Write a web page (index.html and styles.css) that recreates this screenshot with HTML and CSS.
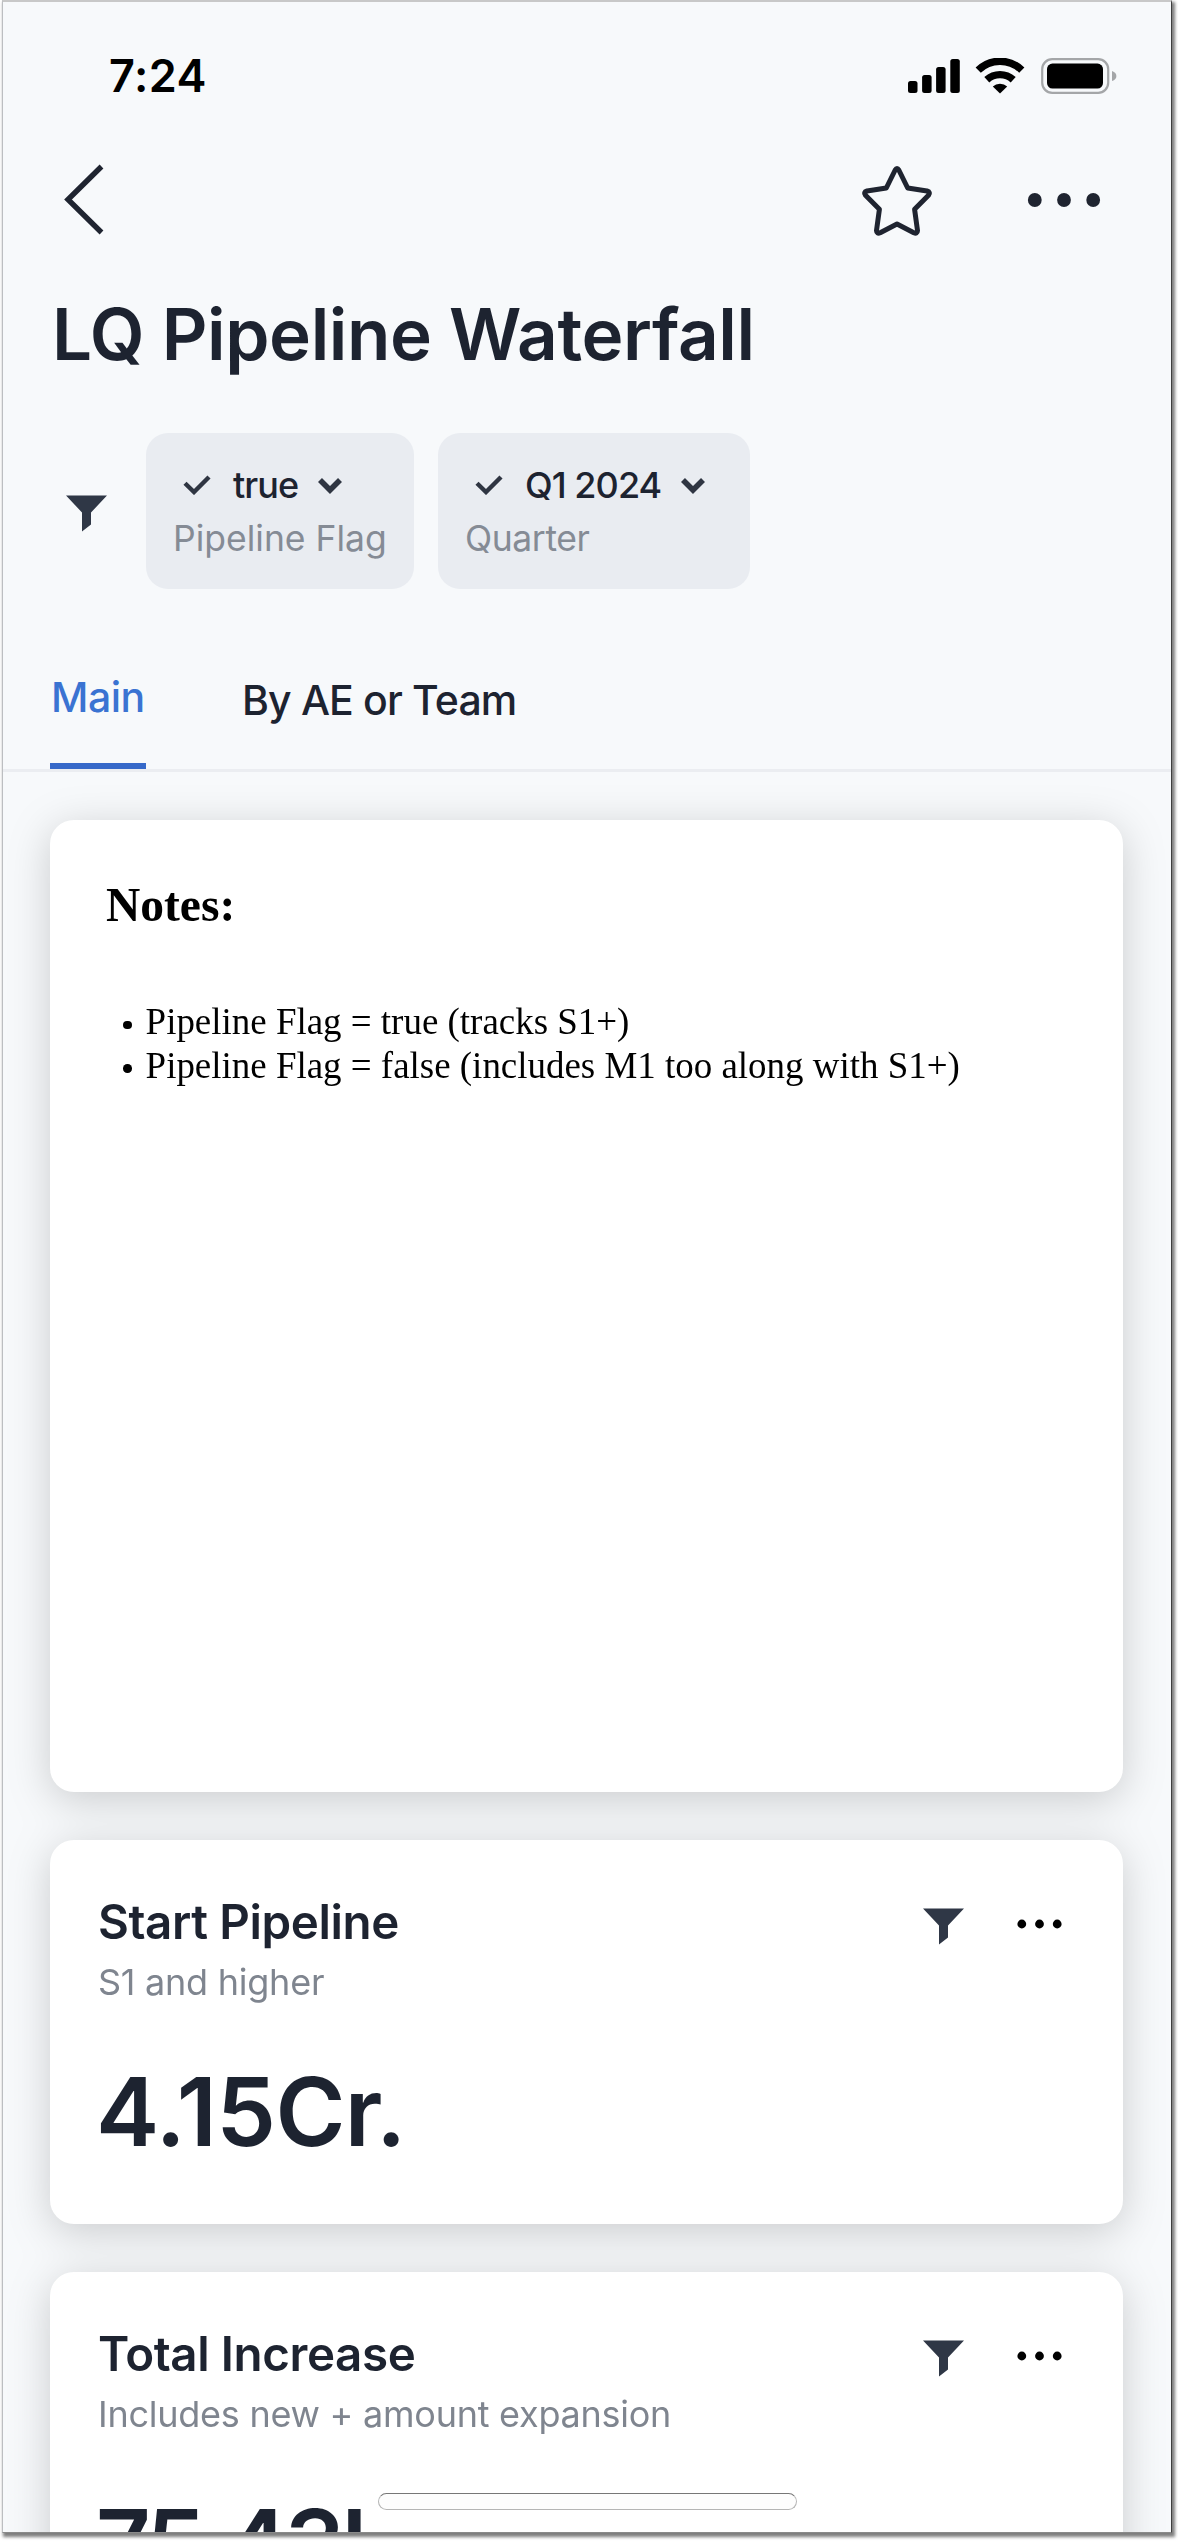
FILE: index.html
```html
<!DOCTYPE html>
<html lang="en">
<head>
<meta charset="utf-8">
<title>LQ Pipeline Waterfall</title>
<link rel="stylesheet" href="styles.css">
</head>
<body>
<svg width="0" height="0" class="sprite" aria-hidden="true">
  <symbol id="funnel" viewBox="0 0 41 37"><path d="M0 .5H41L25 17.5V29.5L16 36.5V17.5Z"/></symbol>
  <symbol id="check" viewBox="0 0 28 20"><path d="M2 8.2L11 17L26 2" fill="none" stroke="currentColor" stroke-width="4.4"/></symbol>
  <symbol id="caret" viewBox="0 0 24 17"><path d="M2 3L12 13L22 3" fill="none" stroke="currentColor" stroke-width="5.6"/></symbol>
  <symbol id="dots" viewBox="0 0 45 10"><circle cx="4.8" cy="5" r="4.4"/><circle cx="22.5" cy="5" r="4.4"/><circle cx="40.2" cy="5" r="4.4"/></symbol>
</svg>
<div class="screen">
  <div class="status">
    <span class="time">7:24</span>
    <div class="status-icons">
      <svg class="signal" width="52" height="36" viewBox="0 0 52 36"><rect x="0" y="23" width="9.5" height="12" rx="2.5"/><rect x="14.1" y="17" width="9.5" height="18" rx="2.5"/><rect x="28.1" y="9" width="9.5" height="26" rx="2.5"/><rect x="42.3" y="1" width="9.5" height="34" rx="2.5"/></svg>
      <svg class="wifi" width="50" height="36" viewBox="0 0 50 36"><g fill="none" stroke="#000" stroke-width="7.4"><path d="M3.2 12.2A31 31 0 0 1 46.8 12.2"/><path d="M11.8 21.8A19.5 19.5 0 0 1 38.2 21.8"/></g><path d="M17.8 28.6A10.3 10.3 0 0 1 32.2 28.6L25 35.6Z"/></svg>
      <svg width="76" height="36" viewBox="0 0 76 36"><rect x="1.2" y="1.2" width="66" height="33.6" rx="10" fill="none" stroke="#a4a6a8" stroke-width="2.2"/><rect x="6" y="5.6" width="56" height="25" rx="5.5"/><path d="M71 13Q75.4 14.5 75.4 18T71 23Z" fill="#a4a6a8"/></svg>
    </div>
  </div>
  <div class="nav">
    <svg width="42" height="74" viewBox="0 0 42 74"><path d="M37.5 3.5L4 36.5L37.5 69.5" fill="none" stroke="#1f2430" stroke-width="5.4"/></svg>
    <div class="nav-actions">
      <svg width="74" height="74" viewBox="0 0 74 74"><path d="M35.2 7Q37 3.8 38.8 7L47.7 25L67 28Q71 29.3 68.5 32.3L54.6 46.3L57.5 67.5Q57.3 71.2 53.8 69.8L37 61L20.2 69.8Q16.7 71.2 16.5 67.5L19.4 46.3L5.5 32.3Q3 29.3 7 28L26.3 25Z" fill="none" stroke="#1f2430" stroke-width="5" stroke-linejoin="round"/></svg>
      <svg width="74" height="16" viewBox="0 0 74 16" fill="#1f2430"><circle cx="7.8" cy="8" r="6.9"/><circle cx="37" cy="8" r="6.9"/><circle cx="66.2" cy="8" r="6.9"/></svg>
    </div>
  </div>
  <h1>LQ Pipeline Waterfall</h1>
  <div class="filters">
    <svg class="funnel" width="41" height="37"><use href="#funnel"/></svg>
    <div class="chip chip-flag">
      <div class="chip-value"><svg width="28" height="20"><use href="#check"/></svg><span>true</span><svg width="24" height="17"><use href="#caret"/></svg></div>
      <div class="chip-label">Pipeline Flag</div>
    </div>
    <div class="chip chip-quarter">
      <div class="chip-value"><svg width="28" height="20"><use href="#check"/></svg><span>Q1 2024</span><svg width="24" height="17"><use href="#caret"/></svg></div>
      <div class="chip-label">Quarter</div>
    </div>
  </div>
  <div class="tabs">
    <div class="tab active">Main</div>
    <div class="tab">By AE or Team</div>
  </div>
  <div class="cards">
    <div class="card notes">
      <h2>Notes:</h2>
      <ul>
        <li>Pipeline Flag = true (tracks S1+)</li>
        <li>Pipeline Flag = false (includes M1 too along with S1+)</li>
      </ul>
    </div>
    <div class="card kpi">
      <div class="kpi-head"><h3>Start Pipeline</h3><svg class="funnel" width="41" height="37"><use href="#funnel"/></svg><svg class="more" width="45" height="10"><use href="#dots"/></svg></div>
      <p class="sub">S1 and higher</p>
      <p class="value">4.15Cr.</p>
    </div>
    <div class="card kpi">
      <div class="kpi-head"><h3>Total Increase</h3><svg class="funnel" width="41" height="37"><use href="#funnel"/></svg><svg class="more" width="45" height="10"><use href="#dots"/></svg></div>
      <p class="sub">Includes new + amount expansion</p>
      <p class="value value-tight">75.43L</p>
    </div>
  </div>
  <div class="home"></div>
</div>
</body>
</html>
```
FILE: styles.css
```css
* { box-sizing: border-box; margin: 0; padding: 0; }
body { background: #fff; font-family: Inter, "Liberation Sans", sans-serif; color: #1d2330; height: 2541px; overflow: hidden; }
svg { display: block; flex: none; }
.sprite { position: absolute; }
.screen { position: relative; margin-left: 2px; width: 1170px; height: 2533px; overflow: hidden; background: #f7f9fb; border: 1px solid #bcbec1; border-top: 2px solid #c8c8c8; border-right-color: #3e3e3e; border-bottom-color: #8a8a8a; box-shadow: 2px 3px 3px 1px rgba(0,0,0,.5); }

.status { height: 147px; display: flex; align-items: center; justify-content: space-between; padding: 0 54px 0 106px; }
.time { font-size: 45px; font-weight: 600; line-height: 54px; letter-spacing: .5px; color: #000; }
.status-icons { display: flex; align-items: center; }
.signal { margin-right: 15px; }
.wifi { margin-right: 16px; }

.nav { height: 102px; display: flex; align-items: center; justify-content: space-between; padding: 0 70px 0 61px; }
.nav-actions { display: flex; align-items: center; gap: 93px; }

h1 { font-size: 71px; line-height: 166px; height: 165px; font-weight: 600; letter-spacing: -.42px; padding-left: 49px; white-space: nowrap; }

.filters { display: flex; align-items: center; padding: 17px 0 0 63px; height: 173px; }
.funnel { fill: #2f3746; }
.filters .funnel { margin-top: 5px; }
.chip { height: 156px; border-radius: 22px; background: #e9ecf1; padding: 30px 0 0 27px; white-space: nowrap; }
.chip-flag { width: 268px; margin-left: 39px; }
.chip-quarter { width: 312px; margin-left: 24px; }
.chip-value { display: flex; align-items: center; height: 44px; font-size: 36px; font-weight: 500; letter-spacing: -.95px; padding-left: 10px; color: #2f3542; }
.chip-value span { margin: 0 20px 0 22px; color: #1d2330; }
.chip-label { font-size: 35.5px; line-height: 44px; margin-top: 10px; color: #858b95; }
.chip-quarter .chip-label { letter-spacing: -.4px; }

.tabs { display: flex; height: 183px; border-bottom: 3px solid #ebedf1; padding-left: 47px; gap: 96px; font-size: 41px; line-height: 50px; font-weight: 450; white-space: nowrap; }
.tab { padding-top: 86px; letter-spacing: -.85px; }
.tab.active { width: 96px; padding: 83px 0 0 1px; border-bottom: 6px solid #3669c9; color: #3a73d2; letter-spacing: -.5px; }

.cards { display: flex; flex-direction: column; gap: 48px; padding: 48px 48px 0 47px; filter: drop-shadow(0 8px 21px rgba(0,0,0,.18)); }
.card { background: #fff; border-radius: 24px; height: 384px; flex: none; }
.notes { height: 972px; font-family: "Liberation Serif", serif; color: #000; padding: 58px 0 0 56px; }
.notes h2 { font-size: 47.5px; line-height: 54px; }
.notes ul { list-style: none; margin-top: 68px; font-size: 36.95px; line-height: 43.7px; }
.notes li { display: flex; align-items: center; white-space: nowrap; }
.notes li::before { content: ""; width: 8.6px; height: 8.6px; border-radius: 50%; background: #000; margin: 6px 14px 0 17px; }

.kpi { padding: 54px 0 0 48px; }
.kpi-head { display: flex; align-items: center; height: 56px; padding-right: 61px; }
h3 { font-size: 47.5px; font-weight: 600; line-height: 56px; letter-spacing: -.4px; margin-right: auto; white-space: nowrap; }
.kpi-head .funnel { margin-top: 8px; }
.more { margin: 4px 0 0 53px; }
.sub { font-size: 36px; line-height: 44px; letter-spacing: -.25px; margin-top: 10px; color: #7f858f; white-space: nowrap; }
.value { font-size: 95px; font-weight: 600; line-height: 116px; letter-spacing: -.6px; margin: 50px 0 0 -2px; white-space: nowrap; }
.value-tight { letter-spacing: -4px; }

.home { position: absolute; left: 375px; top: 2491px; width: 419px; height: 17px; border-radius: 9px; border: 1px solid #b5b5b5; border-top-color: #777; background: #fdfdfd; }
```
